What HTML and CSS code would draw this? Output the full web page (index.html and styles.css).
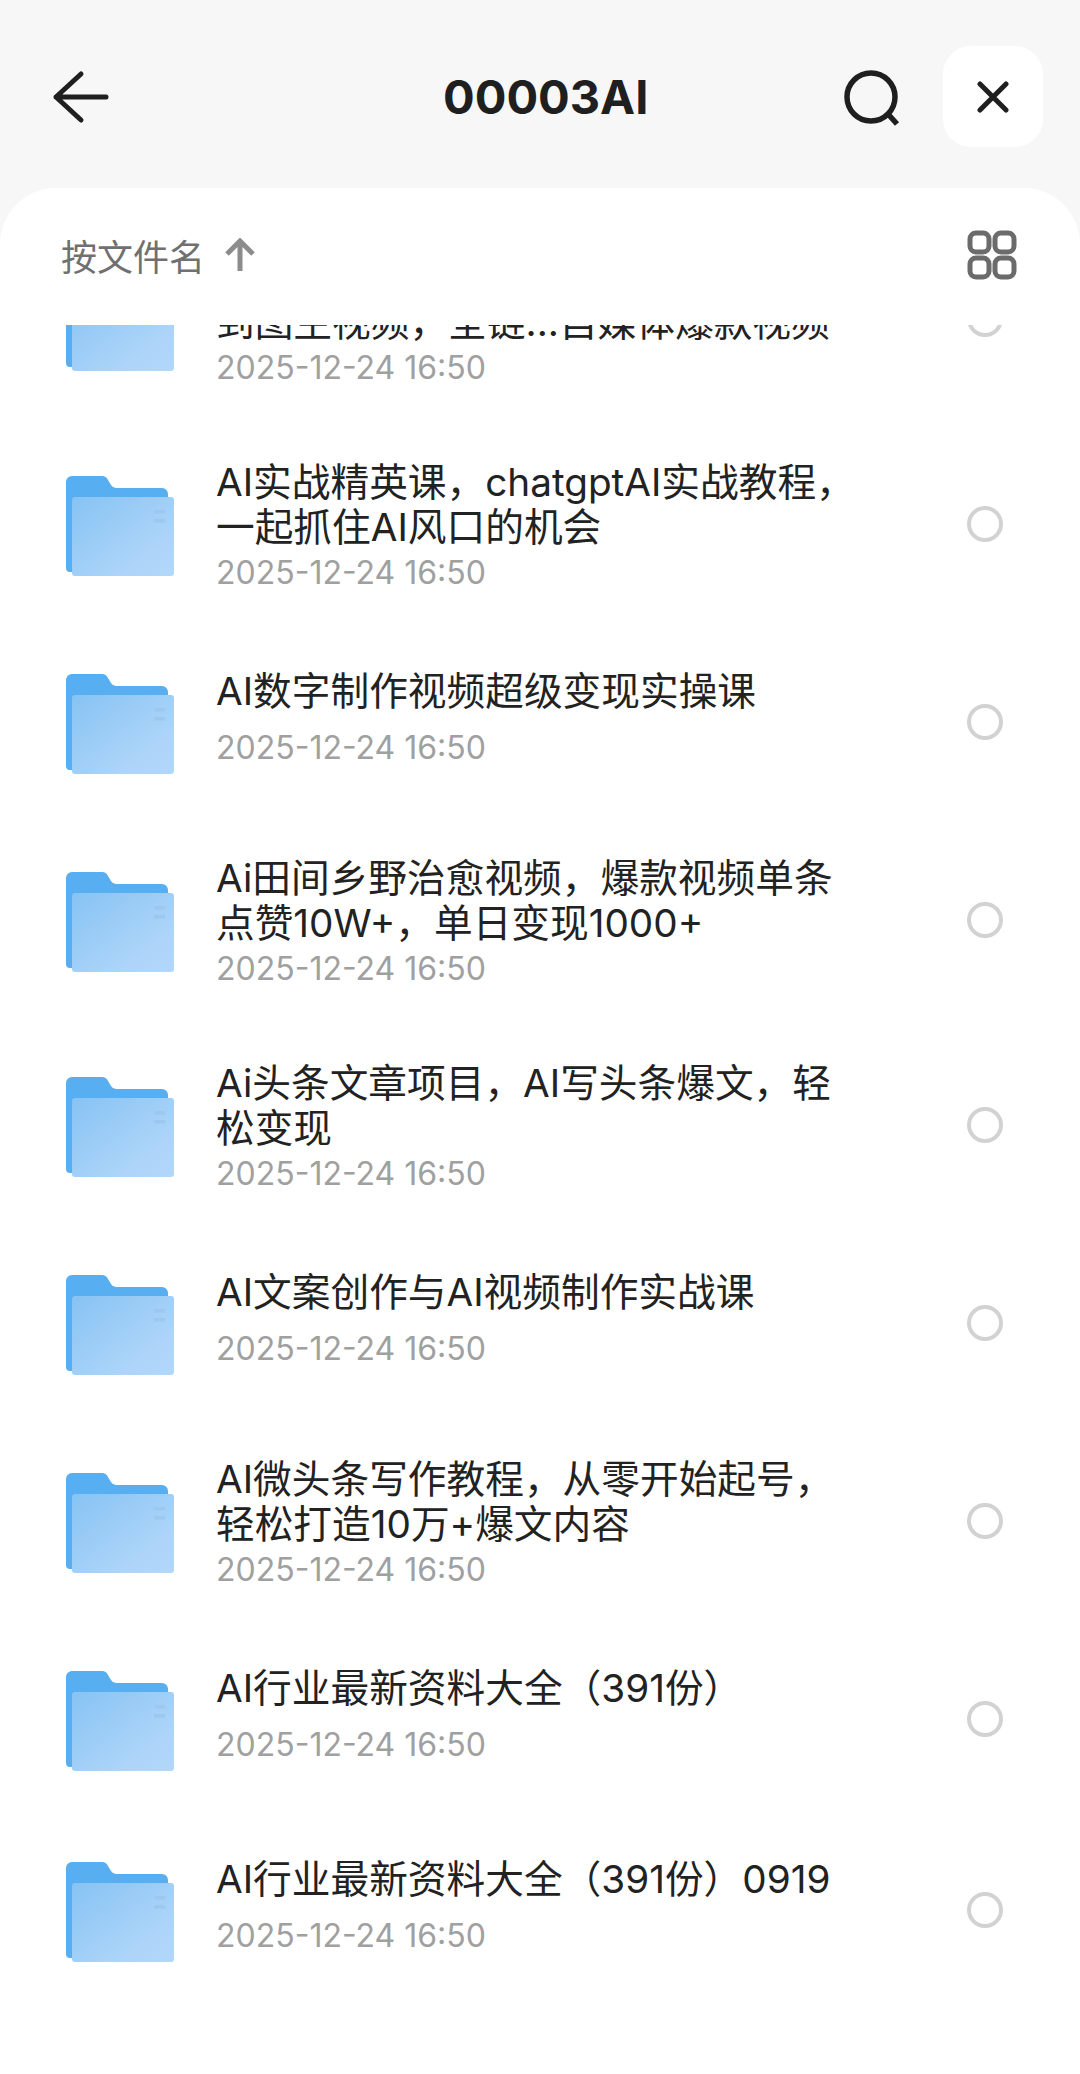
FILE: index.html
```html
<!DOCTYPE html>
<html lang="zh-CN">
<head>
    <meta charset="UTF-8">
    <meta name="viewport" content="width=device-width, initial-scale=1.0">
    <title>00003AI</title>
    <link rel="stylesheet" href="styles.css">
</head>
<body>
    <svg class="defs" width="0" height="0" aria-hidden="true">
        <defs>
            <linearGradient id="folder-front" x1="0" y1="0" x2="1" y2="1">
                <stop offset="0" stop-color="#86c3f3"/>
                <stop offset="0.75" stop-color="#aed5f9"/>
                <stop offset="1" stop-color="#b1d7fa"/>
            </linearGradient>
            <symbol id="folder" viewBox="0 0 108 100">
                <path d="M0 6a6 6 0 0 1 6-6h30a7 7 0 0 1 6 4l3 5a6 6 0 0 0 5 3h46a6 6 0 0 1 6 6v78H4a4 4 0 0 1-4-4z" fill="#57aef0"/>
                <path d="M6 24a3 3 0 0 1 3-3h96a3 3 0 0 1 3 3v73a3 3 0 0 1-3 3H9a3 3 0 0 1-3-3z" fill="url(#folder-front)"/>
                <rect x="88" y="34" width="11" height="3.5" fill="#9cc8ef"/>
                <rect x="88" y="43" width="11" height="3.5" fill="#9cc8ef"/>
            </symbol>
        </defs>
    </svg>

    <header class="topbar">
        <button class="icon-btn back-btn">
            <svg width="60" height="54" viewBox="0 0 60 54"><path d="M54 27H4M29 4 4 27l25 23" fill="none" stroke="#1f1f1f" stroke-width="5" stroke-linecap="round" stroke-linejoin="round"/></svg>
        </button>
        <h1 class="title">00003AI</h1>
        <button class="icon-btn search-btn">
            <svg width="58" height="58" viewBox="0 0 58 58"><circle cx="27" cy="29" r="24" fill="none" stroke="#1f1f1f" stroke-width="5.5"/><path d="M44 46l9 10" stroke="#1f1f1f" stroke-width="5.5"/></svg>
        </button>
        <button class="icon-btn close-btn">
            <svg width="32" height="32" viewBox="0 0 32 32"><path d="M3 3l26 26M29 3 3 29" stroke="#1f1f1f" stroke-width="5" stroke-linecap="round"/></svg>
        </button>
    </header>

    <main class="sheet">
        <div class="sort-bar">
            <span class="sort-label">按文件名</span>
            <svg class="sort-arrow" width="32" height="34" viewBox="0 0 32 34"><path d="M16 33V3M3 16 16 3l13 13" fill="none" stroke="#8c8c8c" stroke-width="5"/></svg>
            <svg class="grid-icon" width="50" height="50" viewBox="0 0 50 50" fill="none" stroke="#6b6b6b" stroke-width="5">
                <rect x="3" y="3" width="19" height="19" rx="6"/>
                <rect x="28" y="3" width="19" height="19" rx="6"/>
                <rect x="3" y="28" width="19" height="19" rx="6"/>
                <rect x="28" y="28" width="19" height="19" rx="6"/>
            </svg>
        </div>

        <div class="list-clip">
            <ul class="file-list">
                <li class="row">
                    <svg class="folder"><use href="#folder"/></svg>
                    <div class="info">
                        <div class="name">AI图文转视频，图文转视频，<br>到图生视频，全链...自媒体爆款视频</div>
                        <div class="date">2025-12-24 16:50</div>
                    </div>
                    <span class="radio"></span>
                </li>
                <li class="row">
                    <svg class="folder"><use href="#folder"/></svg>
                    <div class="info">
                        <div class="name">AI实战精英课，chatgptAI实战教程，<br>一起抓住AI风口的机会</div>
                        <div class="date">2025-12-24 16:50</div>
                    </div>
                    <span class="radio"></span>
                </li>
                <li class="row row-single">
                    <svg class="folder"><use href="#folder"/></svg>
                    <div class="info">
                        <div class="name">AI数字制作视频超级变现实操课</div>
                        <div class="date">2025-12-24 16:50</div>
                    </div>
                    <span class="radio"></span>
                </li>
                <li class="row">
                    <svg class="folder"><use href="#folder"/></svg>
                    <div class="info">
                        <div class="name">Ai田间乡野治愈视频，爆款视频单条<br>点赞10W+，单日变现1000+</div>
                        <div class="date">2025-12-24 16:50</div>
                    </div>
                    <span class="radio"></span>
                </li>
                <li class="row">
                    <svg class="folder"><use href="#folder"/></svg>
                    <div class="info">
                        <div class="name">Ai头条文章项目，AI写头条爆文，轻<br>松变现</div>
                        <div class="date">2025-12-24 16:50</div>
                    </div>
                    <span class="radio"></span>
                </li>
                <li class="row row-single">
                    <svg class="folder"><use href="#folder"/></svg>
                    <div class="info">
                        <div class="name">AI文案创作与AI视频制作实战课</div>
                        <div class="date">2025-12-24 16:50</div>
                    </div>
                    <span class="radio"></span>
                </li>
                <li class="row">
                    <svg class="folder"><use href="#folder"/></svg>
                    <div class="info">
                        <div class="name">AI微头条写作教程，从零开始起号，<br>轻松打造10万+爆文内容</div>
                        <div class="date">2025-12-24 16:50</div>
                    </div>
                    <span class="radio"></span>
                </li>
                <li class="row row-single">
                    <svg class="folder"><use href="#folder"/></svg>
                    <div class="info">
                        <div class="name">AI行业最新资料大全（391份）</div>
                        <div class="date">2025-12-24 16:50</div>
                    </div>
                    <span class="radio"></span>
                </li>
                <li class="row row-single">
                    <svg class="folder"><use href="#folder"/></svg>
                    <div class="info">
                        <div class="name">AI行业最新资料大全（391份）0919</div>
                        <div class="date">2025-12-24 16:50</div>
                    </div>
                    <span class="radio"></span>
                </li>
                <li class="row row-single row-loading">
                    <svg class="folder"><use href="#folder"/></svg>
                    <div class="info">
                        <div class="name">AI前世今生</div>
                        <div class="date">2025-12-24 16:50</div>
                    </div>
                </li>
            </ul>
        </div>
    </main>
</body>
</html>
```

FILE: styles.css
```css
* {
    box-sizing: border-box;
}

html, body {
    margin: 0;
    height: 2074px;
    overflow: hidden;
}

body {
    font-family: "Inter", "Noto Sans CJK SC", sans-serif;
    background-color: #f7f7f8;
    color: #1f1f1f;
    display: flex;
    flex-direction: column;
}

.defs {
    position: absolute;
}

.topbar {
    height: 188px;
    flex: none;
    display: flex;
    align-items: flex-start;
    padding: 46px 37px 0 52px;
}

.icon-btn {
    border: none;
    background: none;
    padding: 0;
    display: flex;
    align-items: center;
    justify-content: center;
}

.back-btn {
    width: 60px;
    height: 102px;
}

.title {
    margin: 0 0 0 331px;
    width: 203px;
    font-size: 47px;
    line-height: 102px;
    font-weight: 700;
    white-space: nowrap;
}

.search-btn {
    margin-left: 198px;
    width: 58px;
    height: 102px;
}

.close-btn {
    margin-left: 41px;
    width: 101px;
    height: 101px;
    background: #fff;
    border-radius: 28px;
}

.sheet {
    flex: 1;
    min-height: 0;
    background: #fff;
    border-radius: 56px 56px 0 0;
    display: flex;
    flex-direction: column;
    padding-bottom: 24px;
}

.sort-bar {
    height: 137px;
    flex: none;
    display: flex;
    align-items: center;
    padding: 0 63px 4px 61px;
}

.sort-label {
    font-size: 36px;
    color: #707070;
}

.sort-arrow {
    margin-left: 19px;
}

.grid-icon {
    margin-left: auto;
}

.list-clip {
    flex: 1;
    min-height: 0;
    overflow: hidden;
}

.file-list {
    list-style: none;
    margin: -109px 0 0;
    padding: 0;
}

.row {
    height: 205px;
    display: flex;
    align-items: center;
    padding: 0 77px 0 66px;
}

.row-single {
    height: 191px;
}

.folder {
    width: 108px;
    height: 100px;
    flex: none;
    margin-top: 4px;
}

.row-loading .folder {
    visibility: hidden;
}

.info {
    margin-left: 42px;
    flex: 1;
    padding-top: 5px;
}

.row-single .info {
    padding-top: 0;
    padding-bottom: 6px;
}

.name {
    font-size: 38.7px;
    line-height: 45px;
    color: #222;
    white-space: nowrap;
}

.date {
    font-size: 32px;
    line-height: 40px;
    margin-top: 3px;
    color: #a0a0a0;
}

.row-single .date {
    margin-top: 14px;
}

.radio {
    width: 36px;
    height: 36px;
    flex: none;
    border: 4px solid #d2d2d2;
    border-radius: 50%;
}
```
